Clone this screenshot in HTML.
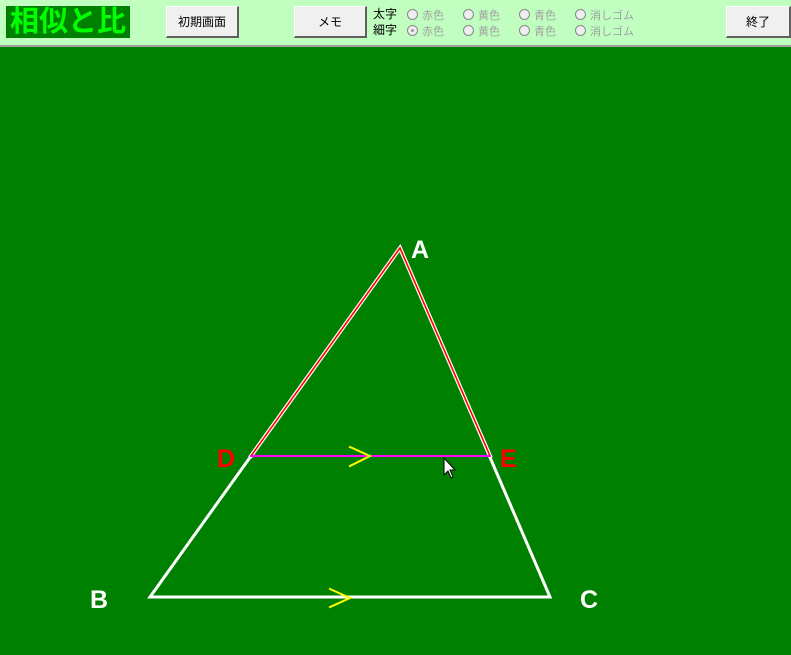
<!DOCTYPE html>
<html><head><meta charset="utf-8"><style>
body{margin:0;width:791px;height:655px;background:#008000;overflow:hidden;position:relative;font-family:"Liberation Sans","Noto Sans CJK JP",sans-serif}
#bar{position:absolute;left:0;top:0;width:791px;height:45px;background:#c0ffc0;border-bottom:2px solid #a0a0a0}
.btn{position:absolute;top:6px;height:32px;background:#f0f0f0;border:1px solid #fff;border-right:2px solid #606060;border-bottom:2px solid #606060;box-sizing:border-box;font-size:12px;text-align:center;line-height:30px;color:#000}
#title{position:absolute;left:6px;top:6px;width:124px;height:32px;background:#008000;color:#00ff00;font-weight:bold;font-size:29px;line-height:32px;text-align:center;letter-spacing:0px}
.lbl{position:absolute;font-size:12px;color:#000;left:373px}
.r{position:absolute;font-size:11px;color:#a0a0a0;white-space:nowrap}
.r i{display:inline-block;width:9px;height:9px;border-radius:50%;background:#eee;border:1px solid #888;vertical-align:-1px;margin-right:4px;position:relative}
.r i.on:after{content:"";position:absolute;left:3px;top:3px;width:3px;height:3px;background:#999;border-radius:50%}
</style></head><body>
<div id="bar">
<div id="title">相似と比</div>
<div class="btn" style="left:166px;width:73px">初期画面</div>
<div class="btn" style="left:294px;width:73px">メモ</div>
<div class="btn" style="left:726px;width:65px">終了</div>
<div class="lbl" style="top:5px">太字</div>
<div class="lbl" style="top:21px">細字</div>
<div class="r" style="left:407px;top:7px"><i></i>赤色</div>
<div class="r" style="left:463px;top:7px"><i></i>黄色</div>
<div class="r" style="left:519px;top:7px"><i></i>青色</div>
<div class="r" style="left:575px;top:7px"><i></i>消しゴム</div>
<div class="r" style="left:407px;top:23px"><i class="on"></i>赤色</div>
<div class="r" style="left:463px;top:23px"><i></i>黄色</div>
<div class="r" style="left:519px;top:23px"><i></i>青色</div>
<div class="r" style="left:575px;top:23px"><i></i>消しゴム</div>
</div>
<svg width="791" height="655" style="position:absolute;left:0;top:0">
<g fill="none" stroke-linecap="square">
<polygon points="400,248 150,597 550,597" stroke="#fff" stroke-width="3"/>
<polyline points="251,456 400,248 490,456" stroke="#fff" stroke-width="4"/>
<polyline points="251,456 400,248 490,456" stroke="#f00" stroke-width="1.6"/>
<line x1="251" y1="456" x2="490" y2="456" stroke="#f0f" stroke-width="2"/>
<polyline points="350,447 370,456 350,466" stroke="#ff0" stroke-width="2"/>
<polyline points="330,589 350,598 330,607" stroke="#ff0" stroke-width="2"/>
</g>
<g font-family="Liberation Sans,sans-serif" font-weight="bold" font-size="25">
<text x="411" y="258" fill="#fff">A</text>
<text x="217" y="467" fill="#f00">D</text>
<text x="500" y="467" fill="#f00">E</text>
<text x="90" y="608" fill="#fff">B</text>
<text x="580" y="608" fill="#fff">C</text>
</g>
<path d="M444,458 L444,475 L448,471 L451,478 L453,477 L450,470 L455,470 Z" fill="#fff" stroke="#000" stroke-width="1"/>
</svg>
</body></html>
